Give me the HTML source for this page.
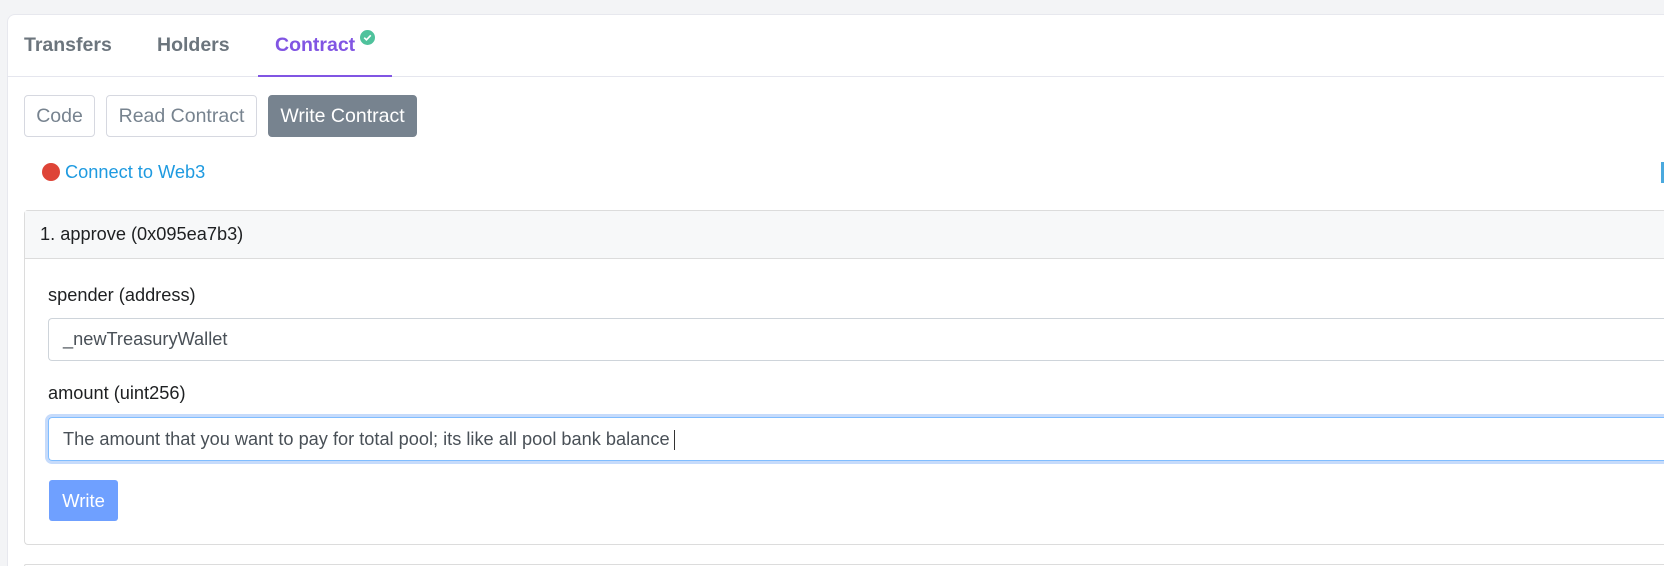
<!DOCTYPE html>
<html><head><style>
*{box-sizing:border-box;margin:0;padding:0}
html,body{width:1664px;height:566px;overflow:hidden}
body{background:#f3f4f6;font-family:"Liberation Sans",sans-serif;position:relative}
.card{position:absolute;left:7px;top:14px;width:1657px;height:552px;background:#fff;border:1px solid #e7e8ee;border-right:none;border-bottom:none;border-radius:8px 0 0 0}
.abs{position:absolute}
.tab{position:absolute;top:34px;font-size:19.5px;font-weight:bold;color:#6c757d}
.hb{position:absolute;left:7px;top:76px;width:1657px;height:1px;background:#e5e6ee}
.btn{position:absolute;top:95px;height:42px;border:1px solid #d6d8e0;border-radius:4px;font-size:19.5px;color:#77838f;line-height:40px;text-align:center}
.panel{position:absolute;left:24px;width:1640px;border:1px solid #dcdcdc;border-right:none;border-radius:4px 0 0 4px}
.lbl{position:absolute;left:48px;font-size:18.2px;color:#1e2022}
.inp{position:absolute;left:48px;width:1616px;border:1px solid #ced4da;border-right:none;border-radius:4px 0 0 4px;font-size:18.2px;color:#495057;padding-left:14px;white-space:nowrap}
</style></head><body>
<div class="card"></div>
<div class="tab" style="left:24px">Transfers</div>
<div class="tab" style="left:157px">Holders</div>
<div class="tab" style="left:275px;color:#8155e3">Contract</div>
<svg class="abs" style="left:360px;top:30px" width="15" height="15" viewBox="0 0 16 16"><circle cx="8" cy="8" r="8" fill="#4fc29c"/><path d="M4.5 8.2l2.4 2.3 4.6-4.8" stroke="#fff" stroke-width="1.8" fill="none"/></svg>
<div class="hb"></div>
<div class="abs" style="left:258px;top:75px;width:134px;height:2px;background:#8155e3"></div>
<div class="btn" style="left:24px;width:71px">Code</div>
<div class="btn" style="left:106px;width:151px">Read Contract</div>
<div class="btn" style="left:268px;width:149px;background:#77838f;border-color:#77838f;color:#fff">Write Contract</div>
<div class="abs" style="left:42px;top:163px;width:18px;height:18px;border-radius:50%;background:#de4437"></div>
<div class="abs" style="left:65px;top:162px;font-size:18.2px;color:#1e9ae0">Connect to Web3</div>
<div class="abs" style="left:1661px;top:162px;width:3px;height:21px;background:#4aa9de"></div>
<div class="panel" style="top:210px;height:335px"></div>
<div class="abs" style="left:25px;top:211px;width:1639px;height:48px;background:#f7f8f9;border-bottom:1px solid #dcdcdc"></div>
<div class="abs" style="left:40px;top:224px;font-size:18.2px;color:#1e2022">1. approve (0x095ea7b3)</div>
<div class="lbl" style="top:285px">spender (address)</div>
<div class="inp" style="top:318px;height:43px;line-height:41px">_newTreasuryWallet</div>
<div class="lbl" style="top:383px">amount (uint256)</div>
<div class="inp" style="top:417px;height:44px;line-height:42px;border-color:#80bdff;box-shadow:0 0 0 3px #c6dbfb">The amount that you want to pay for total pool; its like all pool bank balance<span style="display:inline-block;width:1px;height:20px;background:#333;vertical-align:middle;margin-left:4px"></span></div>
<div class="abs" style="left:49px;top:480px;width:69px;height:41px;background:#6fa0ff;border-radius:3px;color:#fff;font-size:18.5px;line-height:41px;text-align:center">Write</div>
<div class="abs" style="left:24px;top:564px;width:1640px;height:2px;border-top:1px solid #dcdcdc;border-left:1px solid #dcdcdc;border-radius:4px 0 0 0"></div>
</body></html>
